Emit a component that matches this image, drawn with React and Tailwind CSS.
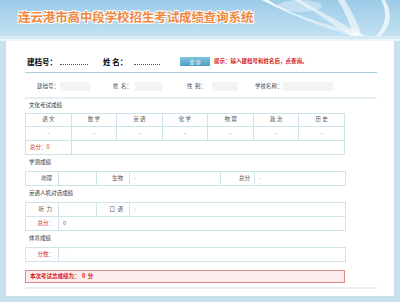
import React from "react";

const F = { fontFamily: '"Noto Sans CJK SC", "Noto Sans", sans-serif' };

function Cell({ children, className = "" }) {
  return <td className={`border border-[#cfe4e8] p-0 ${className}`}>{children}</td>;
}

export default function App() {
  return (
    <div className="w-[400px] h-[302px] overflow-hidden bg-[#c7e0ec]" style={F}>
      {/* header */}
      <div className="relative h-[36px] bg-gradient-to-b from-[#9ccbe8] to-[#c2e1f1] overflow-hidden">
        <svg className="absolute left-0 top-0" width="400" height="36" viewBox="0 0 400 36">
          <defs>
            <linearGradient id="g1" x1="0" y1="0" x2="1" y2="1">
              <stop offset="0" stopColor="#ffffff" stopOpacity="0.95" />
              <stop offset="1" stopColor="#ffffff" stopOpacity="0.2" />
            </linearGradient>
          </defs>
          <path d="M268 0 C290 14 320 24 372 36 L352 36 C318 26 290 14 262 0 Z" fill="url(#g1)" />
          <path d="M300 0 C318 10 340 22 364 36 L350 36 C330 22 312 10 294 0 Z" fill="#ffffff" opacity="0.55" />
          <path d="M345 0 C352 12 358 24 362 36 L354 36 C350 24 345 12 338 0 Z" fill="#ffffff" opacity="0.6" />
          <path d="M385 0 C392 12 392 26 380 36 L376 36 C386 26 388 12 381 0 Z" fill="#ffffff" opacity="0.7" />
          <ellipse cx="300" cy="6" rx="22" ry="6" fill="#ffffff" opacity="0.35" />
        </svg>
        <div
          className="absolute left-[18px] top-[10px] text-[12.4px] font-bold leading-[14px] text-[#f0873d]"
          style={{ textShadow: "0 0 1px #fff, 1px 1px 0 #fff, -1px -1px 0 #fff, 1px -1px 0 #fff, -1px 1px 0 #fff" }}
        >
          连云港市高中段学校招生考试成绩查询系统
        </div>
      </div>
      <div className="h-[3px] bg-[#d6eaf4]" />
      <div className="h-[2px] bg-[#e8f4f9]" />

      {/* panel */}
      <div className="ml-[6px] mr-[6px] h-[255px] bg-white pl-[19px] pr-[11px]">
        {/* search */}
        <div className="pt-[15px] h-[26px] flex items-center text-black">
          <span className="ml-[2px] w-[31px] text-[7.5px] font-bold leading-none whitespace-nowrap">建档号：</span>
          <span className="ml-[2px] w-[28px] h-[1px] mt-[6px] border-b border-dotted border-[#555]" />
          <span className="ml-[15px] w-[23px] text-[7.5px] font-bold leading-none whitespace-nowrap">姓&nbsp;名：</span>
          <span className="ml-[8px] w-[26px] h-[1px] mt-[6px] border-b border-dotted border-[#555]" />
          <div className="ml-[20px] w-[30px] h-[9px] bg-gradient-to-b from-[#7fc4de] to-[#4d9fc2] text-white text-[5px] flex items-center justify-center leading-none">
            查&nbsp;询
          </div>
          <span className="ml-[4px] text-[5.5px] font-bold text-[#d42020] leading-none">提示：输入建档号和姓名后，点查询。</span>
        </div>
        <div className="mt-[5px] w-[352px] border-b border-[#a6d0e1]" />

        {/* info row */}
        <div className="w-[352px] h-[26px] flex items-end pb-[6px] text-[5.5px] text-[#444] border-b-2 border-[#e6eff2]">
          <div className="flex items-center h-[9px]">
            <span className="ml-[12px] w-[23px] leading-none">建档号：</span>
            <div className="w-[30px] h-[9px] bg-[#f1f3f4]" />
            <span className="ml-[23px] w-[22px] leading-none">姓&nbsp;&nbsp;名：</span>
            <div className="w-[27px] h-[9px] bg-[#f1f3f4]" />
            <span className="ml-[25px] w-[25px] leading-none">性&nbsp;&nbsp;别：</span>
            <div className="w-[26px] h-[9px] bg-[#f1f3f4]" />
            <span className="ml-[17px] w-[28px] leading-none">学校名称：</span>
            <div className="w-[50px] h-[9px] bg-[#f1f3f4]" />
          </div>
        </div>

        {/* 文化考试成绩 */}
        <div className="h-[14px] flex items-center pl-[4px] text-[5.5px] text-[#333] leading-none">文化考试成绩</div>
        <table className="w-[320px] border-collapse table-fixed text-[5.5px] text-[#555] leading-none">
          <tbody>
            <tr className="h-[13px]">
              {["语 文", "数 学", "英 语", "化 学", "物 理", "政 治", "历 史"].map((t) => (
                <Cell key={t} className="text-center">{t}</Cell>
              ))}
            </tr>
            <tr className="h-[14px]">
              {[0, 1, 2, 3, 4, 5, 6].map((i) => (
                <Cell key={i} className="text-center">-</Cell>
              ))}
            </tr>
            <tr className="h-[14px]">
              <Cell className="pl-[4px] text-[#d43030]">
                <span className="whitespace-nowrap">总分：0</span>
              </Cell>
              <td colSpan={6} className="border border-[#cfe4e8] border-l-0" />
            </tr>
          </tbody>
        </table>

        {/* 学测成绩 */}
        <div className="h-[16px] flex items-center pl-[4px] text-[5.5px] text-[#333] leading-none">学测成绩</div>
        <table className="w-[320px] border-collapse table-fixed text-[5.5px] text-[#555] leading-none">
          <colgroup>
            <col className="w-[33px]" />
            <col className="w-[38px]" />
            <col className="w-[33px]" />
            <col className="w-[91px]" />
            <col className="w-[34px]" />
            <col className="w-[91px]" />
          </colgroup>
          <tbody>
            <tr className="h-[14px]">
              <Cell className="text-right pr-[6px]">地理</Cell>
              <Cell className="pl-[4px] text-[#999]">-</Cell>
              <Cell className="text-right pr-[6px]">生物</Cell>
              <Cell className="pl-[4px] text-[#999]">-</Cell>
              <Cell className="text-right pr-[4px]">总分</Cell>
              <Cell className="pl-[4px] text-[#999]">-</Cell>
            </tr>
          </tbody>
        </table>

        {/* 英语人机对话成绩 */}
        <div className="h-[16px] flex items-center pl-[4px] text-[5.5px] text-[#333] leading-none">英语人机对话成绩</div>
        <table className="w-[320px] border-collapse table-fixed text-[5.5px] text-[#555] leading-none">
          <colgroup>
            <col className="w-[33px]" />
            <col className="w-[38px]" />
            <col className="w-[33px]" />
            <col className="w-[216px]" />
          </colgroup>
          <tbody>
            <tr className="h-[14px]">
              <Cell className="text-right pr-[6px]">听&nbsp;&nbsp;力</Cell>
              <Cell className="pl-[4px] text-[#999]">-</Cell>
              <Cell className="text-right pr-[6px]">口&nbsp;&nbsp;语</Cell>
              <Cell className="pl-[4px] text-[#999]">-</Cell>
            </tr>
            <tr className="h-[14px]">
              <Cell className="text-right pr-[4px] text-[#d43030]">总分：</Cell>
              <td colSpan={3} className="border border-[#cfe4e8] pl-[4px]">0</td>
            </tr>
          </tbody>
        </table>

        {/* 体育成绩 */}
        <div className="h-[16px] flex items-center pl-[4px] text-[5.5px] text-[#333] leading-none">体育成绩</div>
        <table className="w-[320px] border-collapse table-fixed text-[5.5px] text-[#555] leading-none">
          <colgroup>
            <col className="w-[33px]" />
            <col className="w-[287px]" />
          </colgroup>
          <tbody>
            <tr className="h-[14px]">
              <Cell className="text-right pr-[4px] text-[#d43030]">分数：</Cell>
              <Cell className="pl-[4px] text-[#999]">-</Cell>
            </tr>
          </tbody>
        </table>

        {/* total */}
        <div className="mt-[8px] w-[320px] h-[13px] border border-[#dc8a8a] bg-[#fcecec] flex items-center pl-[4px] text-[5.5px] font-bold text-[#d42020] leading-none">
          本次考试总成绩为：&nbsp;&nbsp;0&nbsp;&nbsp;分
        </div>
        <div className="mt-[4px] w-[352px] border-b-2 border-[#e6eff2]" />
      </div>
    </div>
  );
}
